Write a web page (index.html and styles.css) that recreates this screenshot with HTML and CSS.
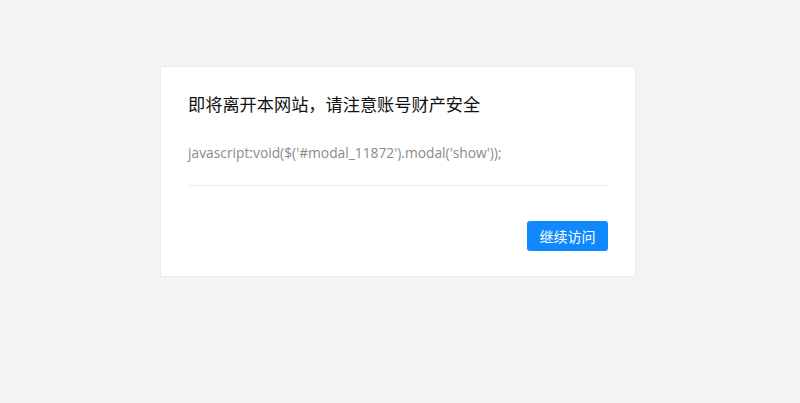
FILE: index.html
```html
<!DOCTYPE html>
<html lang="zh-CN">

<head>
    <meta charset="UTF-8">
    <title>安全提示</title>
    <link rel="stylesheet" href="styles.css">
</head>

<body>
    <div class="wrap">
        <div class="dialog">
            <h3>即将离开本网站，请注意账号财产安全</h3>
            <p class="link">javascript:void($('#modal_11872').modal('show'));</p>
            <div class="btn">
                <a href="#" class="goBtn">继续访问</a>
            </div>
        </div>
    </div>
</body>

</html>
```

FILE: styles.css
```css
* {
    padding: 0;
    margin: 0;
    box-sizing: border-box;
}

body {
    background: #f3f5f5;
    font-family: "Open Sans", "Noto Sans CJK SC", sans-serif;
}

.wrap {
    padding-top: 66px;
}

.dialog {
    width: 476px;
    margin: 0 0 0 160px;
    background: #fff;
    border: 1px solid #e9ecec;
    padding: 25px 27px 25px;
}

.dialog h3 {
    font-size: 17.2px;
    font-weight: normal;
    color: #111;
    line-height: 24px;
    font-family: "Noto Sans CJK SC", sans-serif;
}

.link {
    margin-top: 27px;
    font-size: 13.8px;
    color: #8a8a8a;
    line-height: 20px;
    padding-bottom: 22px;
    border-bottom: 1px solid #ececec;
}

.btn {
    text-align: right;
    padding-top: 35px;
}

.goBtn {
    display: inline-block;
    width: 81px;
    height: 30px;
    line-height: 30px;
    text-align: center;
    background: #1089ff;
    color: #fff;
    border-radius: 3px;
    font-size: 14px;
    text-decoration: none;
    font-family: "Noto Sans CJK SC", sans-serif;
}
```
